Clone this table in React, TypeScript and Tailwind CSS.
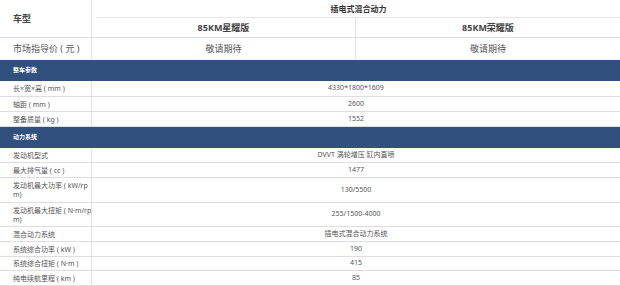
import React from "react";

const font = { fontFamily: '"Noto Sans", "Noto Sans CJK SC", sans-serif' };

type Row = { label: string; value: string; h: string };

function DataRow({ label, value, h }: Row) {
  return (
    <div className={`grid grid-cols-[92px_1fr] border-b border-[#dedede] ${h}`}>
      <div className="flex items-center overflow-hidden border-r border-[#e2e2e2] pl-[13px] text-[7px] leading-[9px] text-[#555] whitespace-pre">
        {label}
      </div>
      <div className="flex items-center justify-center text-[7px] text-[#555]">{value}</div>
    </div>
  );
}

function Section({ title }: { title: string }) {
  return (
    <div className="flex h-[21px] items-center bg-[#31507e] pl-[13px] text-[6px] font-bold text-white">
      {title}
    </div>
  );
}

export default function App() {
  const body: Row[] = [
    { label: "长×宽×高 ( mm )", value: "4330*1800*1609", h: "h-[16px]" },
    { label: "轴距 ( mm )", value: "2600", h: "h-[15px]" },
    { label: "整备质量 ( kg )", value: "1552", h: "h-[15px]" },
  ];
  const power: Row[] = [
    { label: "发动机型式", value: "DVVT 涡轮增压 缸内直喷", h: "h-[15px]" },
    { label: "最大排气量 ( cc )", value: "1477", h: "h-[15px]" },
    { label: "发动机最大功率 ( kW/rp\nm)", value: "130/5500", h: "h-[25px]" },
    { label: "发动机最大扭矩 ( N·m/rp\nm)", value: "255/1500-4000", h: "h-[24px]" },
    { label: "混合动力系统", value: "插电式混合动力系统", h: "h-[15px]" },
    { label: "系统综合功率 ( kW )", value: "190", h: "h-[15px]" },
    { label: "系统综合扭矩 ( N·m )", value: "415", h: "h-[14px]" },
    { label: "纯电续航里程 ( km )", value: "85", h: "h-[15px]" },
  ];
  return (
    <div className="w-[620px] h-[286px] overflow-hidden bg-white" style={font}>
      <div className="grid grid-cols-[92px_1fr] border-b border-[#dedede]">
        <div className="flex items-center border-r border-[#e2e2e2] pl-[13px] text-[9px] font-bold text-[#444]">
          车型
        </div>
        <div className="flex flex-col">
          <div className="flex h-[18px] items-center justify-center border-b border-[#e6e6e6] ml-[5px] text-[8px] font-bold text-[#333]">
            插电式混合动力
          </div>
          <div className="grid h-[19px] grid-cols-2 text-[9px] font-bold text-[#444]">
            <div className="flex items-center justify-center border-r border-[#e2e2e2]">85KM星耀版</div>
            <div className="flex items-center justify-center">85KM荣耀版</div>
          </div>
        </div>
      </div>
      <div className="grid h-[22px] grid-cols-[92px_1fr_1fr] text-[9px] text-[#555]">
        <div className="flex items-center border-r border-[#e2e2e2] pl-[13px]">市场指导价 ( 元 )</div>
        <div className="flex items-center justify-center border-r border-[#e2e2e2]">敬请期待</div>
        <div className="flex items-center justify-center">敬请期待</div>
      </div>
      <Section title="整车参数" />
      {body.map((r) => (
        <DataRow key={r.label} {...r} />
      ))}
      <Section title="动力系统" />
      {power.map((r) => (
        <DataRow key={r.label} {...r} />
      ))}
    </div>
  );
}
